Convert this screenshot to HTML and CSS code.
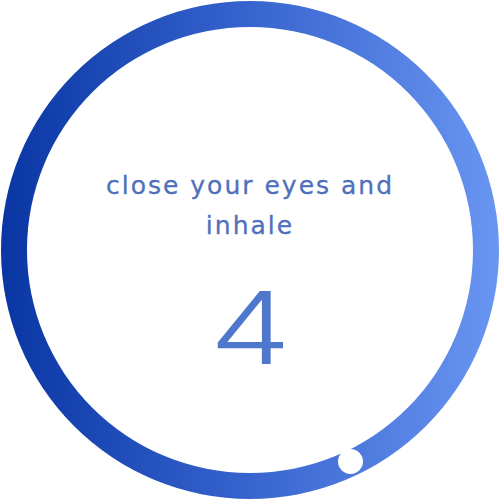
FILE: index.html
```html
<!DOCTYPE html>
<html lang="en">
<head>
<meta charset="utf-8">
<title>Breathe</title>
<link rel="stylesheet" href="styles.css">
</head>
<body>
<div class="stage">
  <div class="ring">
    <div class="face">
      <p class="prompt">close your eyes and<br>inhale</p>
      <div class="count">4</div>
    </div>
    <span class="knob"></span>
  </div>
</div>
</body>
</html>
```
FILE: styles.css
```css
html, body {
  margin: 0;
  padding: 0;
  background: #ffffff;
}
.stage {
  width: 500px;
  height: 500px;
  padding: 1px;
  box-sizing: border-box;
}
.ring {
  position: relative;
  width: 498px;
  height: 498px;
  border-radius: 50%;
  background: linear-gradient(to right, #0a36a4 0%, #3864cf 50%, #6996f1 100%);
  padding: 26px;
  box-sizing: border-box;
}
.face {
  width: 100%;
  height: 100%;
  border-radius: 50%;
  background: #ffffff;
  display: flex;
  flex-direction: column;
  align-items: center;
  padding-top: 139px;
  box-sizing: border-box;
}
.prompt {
  margin: 0;
  font-family: "DejaVu Sans", "Liberation Sans", sans-serif;
  font-size: 25px;
  line-height: 40px;
  letter-spacing: 2px;
  color: #4f70ba;
  text-align: center;
  -webkit-text-stroke: 0.3px #4f70ba;
}
.count {
  margin-top: 32px;
  font-family: "Inter", "Liberation Sans", sans-serif;
  font-weight: 300;
  font-size: 100px;
  line-height: 100px;
  color: #4f78cc;
  transform: scaleX(1.3);
}
.knob {
  position: absolute;
  left: 337px;
  top: 448px;
  width: 25px;
  height: 25px;
  border-radius: 50%;
  background: #ffffff;
}
```
